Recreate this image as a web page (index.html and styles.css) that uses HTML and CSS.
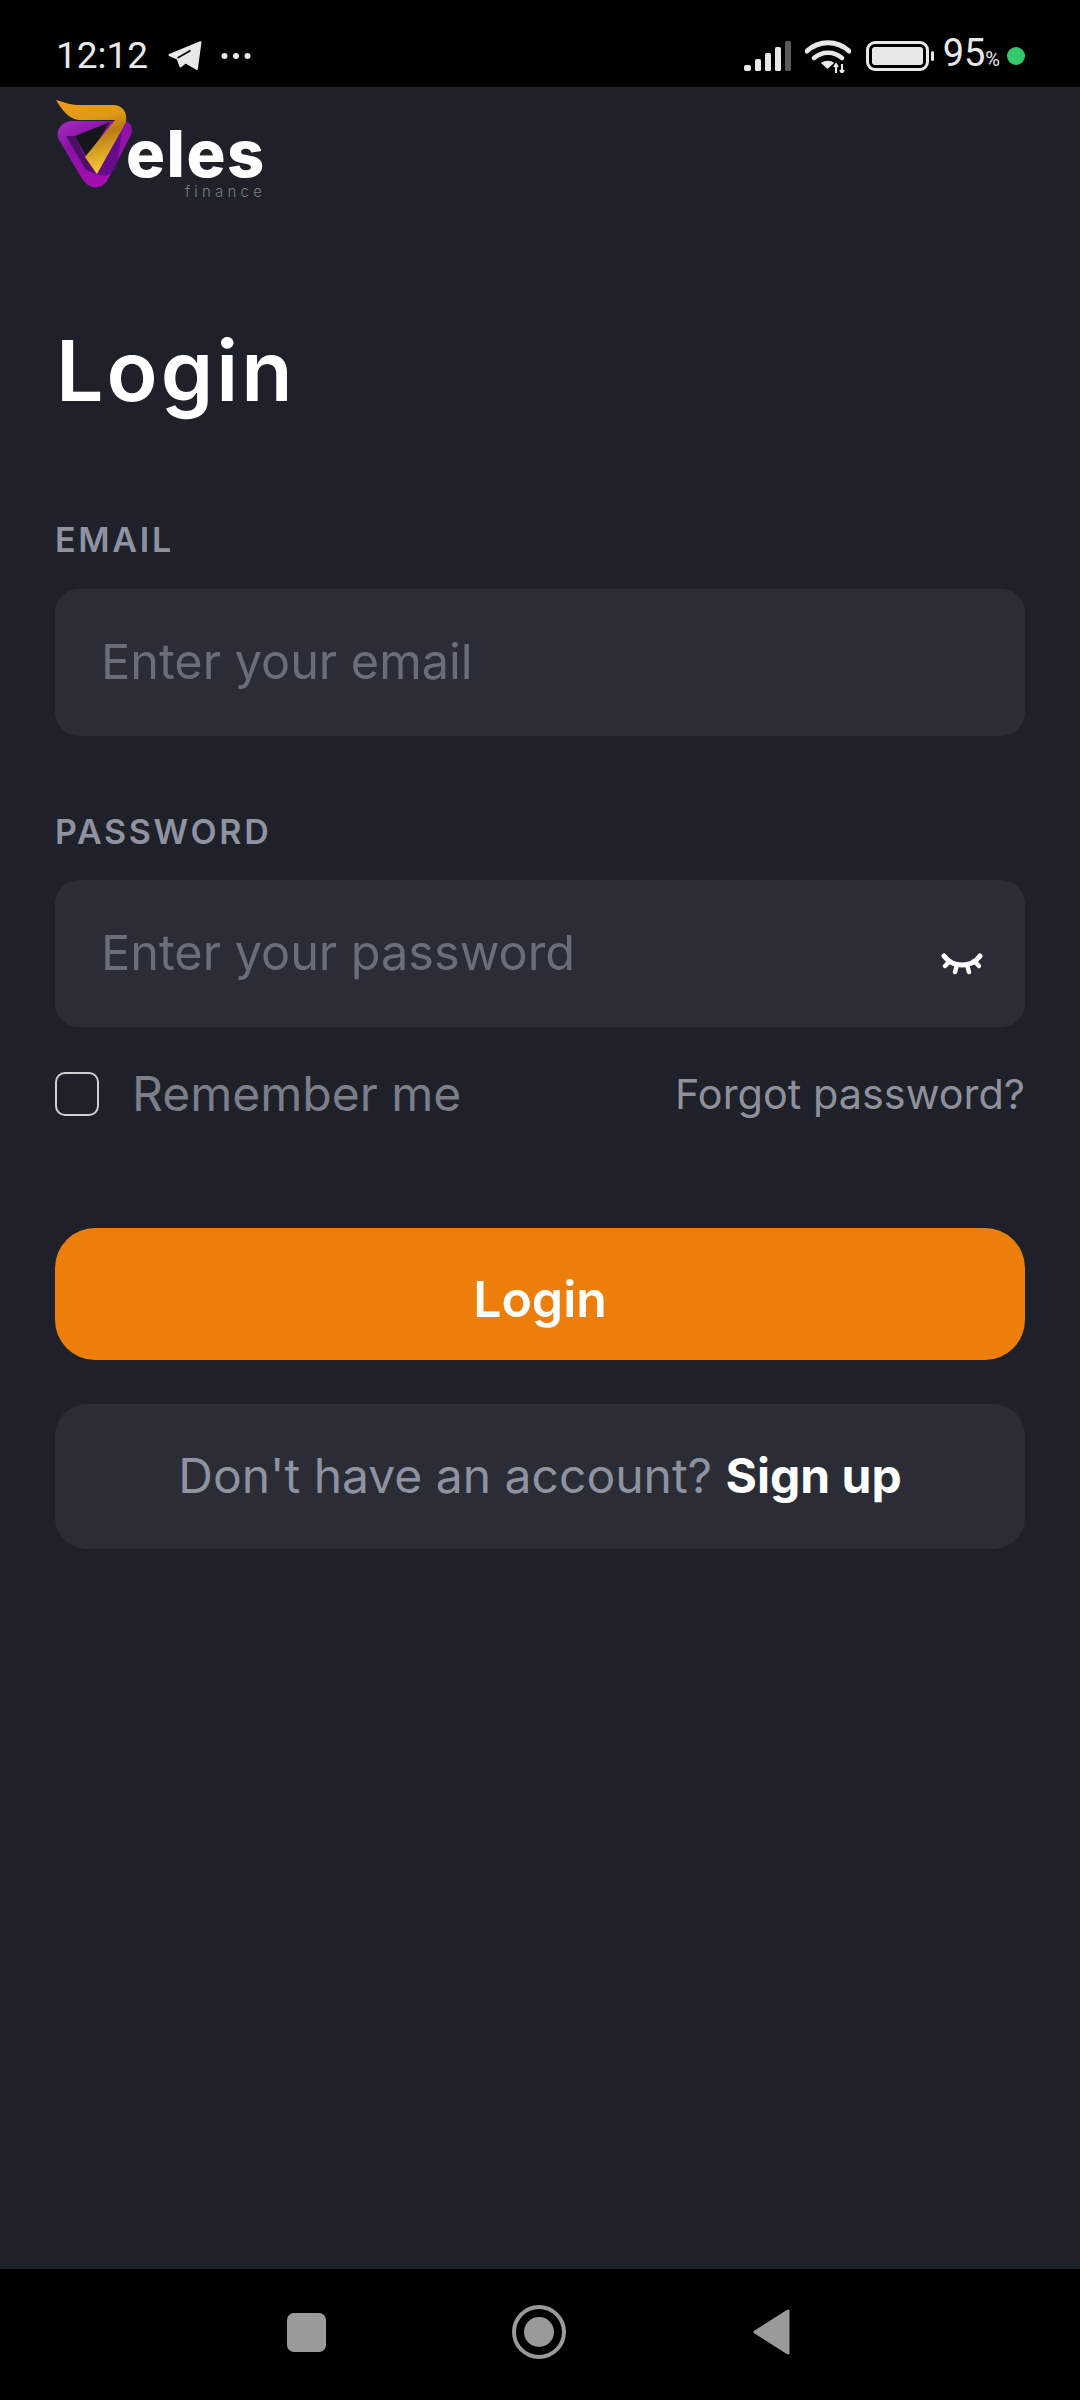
FILE: index.html
```html
<!DOCTYPE html>
<html lang="en">
  <head>
    <meta charset="UTF-8" />
    <meta name="viewport" content="width=device-width, initial-scale=1.0" />
    <title>Veles Finance - Login</title>
    <link rel="stylesheet" href="styles.css">
  </head>
  <body>
    <!-- status bar -->
    <div class="status-bar">
      <div class="status-left">
        <span class="status-time">12:12</span>
        <svg class="icon-telegram" viewBox="0 0 34 30">
          <path d="M1.500 14 32.500 1.200 28.800 28 17.500 21.500 12.500 25.500 9.500 17.500Z" fill="#e8e8e8" stroke="#e8e8e8" stroke-width="2" stroke-linejoin="round"/>
          <path d="M9.500 17 22.500 9.500" fill="none" stroke="#000" stroke-width="1.500"/>
        </svg>
        <svg class="icon-dots" viewBox="0 0 30 8">
          <circle cx="3.500" cy="4" r="3" fill="#e8e8e8"/>
          <circle cx="15" cy="4" r="3" fill="#e8e8e8"/>
          <circle cx="26.500" cy="4" r="3" fill="#e8e8e8"/>
        </svg>
      </div>
      <div class="status-right">
        <svg class="icon-signal" viewBox="0 0 48 30">
          <rect x="0" y="24" width="7" height="6" rx="2" fill="#e8e8e8"/>
          <rect x="11" y="18" width="6" height="12" rx="1.500" fill="#e8e8e8"/>
          <rect x="21" y="12" width="6" height="18" rx="1.500" fill="#e8e8e8"/>
          <rect x="31" y="6" width="6" height="24" rx="1.500" fill="#e8e8e8"/>
          <rect x="41" y="0" width="6" height="30" rx="1.500" fill="#5a5a5a"/>
        </svg>
        <svg class="icon-wifi" viewBox="0 0 46 34">
          <path d="M2 12C14 1 32 1 44 12" fill="none" stroke="#e8e8e8" stroke-width="5" stroke-linecap="round"/>
          <path d="M9 19c8-7 20-7 28 0" fill="none" stroke="#e8e8e8" stroke-width="4.500" stroke-linecap="round"/>
          <path d="M16 25c4-3 10-3 13 0l-6.500 6Z" fill="#e8e8e8" transform="translate(0 -1)"/>
          <path d="M31 34v-8M29 28l2-3 2 3M37 25v8M35 31l2 3 2-3" fill="none" stroke="#e8e8e8" stroke-width="2"/>
        </svg>
        <div class="battery">
          <div class="battery-body"><div class="battery-fill"></div></div>
          <div class="battery-nub"></div>
        </div>
        <span class="status-percent">95<small>%</small></span>
        <span class="status-led"></span>
      </div>
    </div>

    <div class="main-content">
      <!-- logo -->
      <svg class="logo" viewBox="50 95 220 110">
        <defs>
          <linearGradient id="logoPurple" x1="0" y1="0" x2="0.6" y2="1">
            <stop offset="0" stop-color="#a92fc0"/>
            <stop offset="0.35" stop-color="#8a10a8"/>
            <stop offset="1" stop-color="#a80fb0"/>
          </linearGradient>
          <linearGradient id="logoGold" x1="0.2" y1="0" x2="0.4" y2="1">
            <stop offset="0" stop-color="#f09a12"/>
            <stop offset="0.3" stop-color="#dc9a18"/>
            <stop offset="0.5" stop-color="#b87a14"/>
            <stop offset="1" stop-color="#f6c833"/>
          </linearGradient>
        </defs>
        <path fill="url(#logoPurple)" d="M72 121H112L127 122C132 123 133 130 131 135L108 179C104 187 95 190 88 185C85 183 83 180 81 177L59 140C55 132 60 122 72 121Z"/>
        <path fill="#4a1066" d="M66 136 86 170 96 174 85 157 75 136Z"/>
        <path fill="#4f0d7a" d="M96 174 122 131 116 170 106 176Z" opacity="0.7"/>
        <path fill="#14161c" d="M75 136 110 122 87 158Z"/>
        <path fill="url(#logoGold)" d="M56 100C66 103 72 105 80 105H113C122 105 128 112 126 122L97 174 85 157 115 120H78C68 118 62 110 56 100Z"/>
        <text class="logo-name" x="126" y="177">eles</text>
        <text class="logo-sub" x="185" y="197">finance</text>
      </svg>

      <h1 class="page-title">Login</h1>

      <form class="login-form">
        <label class="field-label">EMAIL</label>
        <div class="input-box">
          <input class="text-input" type="text" placeholder="Enter your email" />
        </div>

        <label class="field-label field-label-second">PASSWORD</label>
        <div class="input-box">
          <input class="text-input" type="password" placeholder="Enter your password" />
          <svg class="icon-eye" viewBox="0 0 42 24">
            <path d="M3 3C12 15 30 15 39 3" fill="none" stroke="#fff" stroke-width="5" stroke-linecap="round"/>
            <path d="M8 9 4 13M34 9l4 4M16 12l-2 7M26 12l2 7" fill="none" stroke="#fff" stroke-width="4.500" stroke-linecap="round"/>
          </svg>
        </div>

        <div class="form-options">
          <label class="remember">
            <span class="checkbox"></span>
            Remember me
          </label>
          <a class="forgot-link">Forgot password?</a>
        </div>

        <button class="login-button" type="button">Login</button>

        <div class="signup-card">
          Don't have an account? <a class="signup-link">Sign up</a>
        </div>
      </form>
    </div>

    <!-- bottom nav -->
    <div class="nav-bar">
      <div class="nav-square"></div>
      <svg class="nav-home" viewBox="0 0 54 54">
        <circle cx="27" cy="27" r="25" fill="none" stroke="#9a9a9a" stroke-width="4"/>
        <circle cx="27" cy="27" r="15" fill="#9a9a9a"/>
      </svg>
      <svg class="nav-back" viewBox="0 0 37 46">
        <path d="M35 2 2 23l33 21Z" fill="#9a9a9a" stroke="#9a9a9a" stroke-width="3" stroke-linejoin="round"/>
      </svg>
    </div>
  </body>
</html>
```

FILE: styles.css
```css
* {
  margin: 0;
  padding: 0;
  box-sizing: border-box;
}

body {
  font-family: Inter, "Noto Sans", sans-serif;
  background-color: #1e2129;
  color: #ffffff;
  width: 1080px;
  height: 2400px;
  display: flex;
  flex-direction: column;
}

/* status bar */
.status-bar {
  height: 87px;
  background: #000000;
  display: flex;
  justify-content: space-between;
  align-items: center;
  padding: 24px 55px 0 56px;
  font-family: Roboto, sans-serif;
  color: #e8e8e8;
}

.status-left,
.status-right {
  display: flex;
  align-items: center;
}

.status-time {
  font-size: 37px;
  line-height: 38px;
  margin-right: 20px;
}

.icon-telegram {
  width: 34px;
  height: 30px;
  margin-right: 19px;
}

.icon-dots {
  width: 30px;
  height: 8px;
}

.icon-signal {
  width: 48px;
  height: 30px;
  margin-right: 13px;
}

.icon-wifi {
  width: 46px;
  height: 34px;
  margin-right: 15px;
}

.battery {
  display: flex;
  align-items: center;
  margin-right: 9px;
}

.battery-body {
  width: 63px;
  height: 30px;
  border: 3px solid #e8e8e8;
  border-radius: 9px;
  padding: 3px;
}

.battery-fill {
  height: 100%;
  background: #e8e8e8;
  border-radius: 3px;
}

.battery-nub {
  width: 3px;
  height: 10px;
  margin-left: 2px;
  background: #e8e8e8;
  border-radius: 2px;
}

.status-percent {
  font-size: 38px;
  line-height: 38px;
  margin-right: 7px;
}

.status-percent small {
  font-size: 20px;
}

.status-led {
  width: 18px;
  height: 18px;
  border-radius: 50%;
  background: #34c96a;
}

/* main */
.main-content {
  flex: 1;
  padding: 8px 55px 0;
}

.logo {
  display: block;
  width: 220px;
  height: 110px;
  margin-left: -5px;
}

.logo-name {
  font-size: 65px;
  font-weight: 800;
  letter-spacing: 1.500px;
  fill: #ffffff;
}

.logo-sub {
  font-size: 15px;
  font-weight: 300;
  letter-spacing: 4.200px;
  fill: #7a7d86;
}

.page-title {
  font-size: 84px;
  line-height: 100px;
  font-weight: 600;
  letter-spacing: 3px;
  margin-top: 116px;
  margin-left: 1px;
}

.login-form {
  margin-top: 99px;
}

.field-label {
  display: block;
  font-size: 34px;
  line-height: 40px;
  font-weight: 600;
  letter-spacing: 2.700px;
  color: #8f92a0;
  margin-bottom: 29px;
}

.field-label-second {
  margin-top: 76px;
  margin-bottom: 28px;
}

.input-box {
  position: relative;
  height: 147px;
  background: #2a2d35;
  border-radius: 24px;
  display: flex;
  align-items: center;
  padding: 0 46px 3px;
}

.text-input {
  width: 100%;
  background: transparent;
  border: none;
  outline: none;
  font-family: Inter, sans-serif;
  font-size: 48.600px;
  color: #ffffff;
}

.text-input::placeholder {
  color: #6a6d7a;
  opacity: 1;
}

.icon-eye {
  position: absolute;
  right: 42px;
  top: 73px;
  width: 42px;
  height: 24px;
}

.form-options {
  display: flex;
  justify-content: space-between;
  align-items: center;
  margin-top: 45px;
}

.remember {
  display: flex;
  align-items: center;
  gap: 33px;
  font-size: 48px;
  line-height: 44px;
  color: #7c7e8a;
}

.checkbox {
  width: 44px;
  height: 44px;
  border: 2px solid #cfd0d4;
  border-radius: 10px;
}

.forgot-link {
  font-size: 41.400px;
  line-height: 44px;
  color: #8f909b;
}

.login-button {
  display: block;
  width: 100%;
  height: 132px;
  margin-top: 112px;
  padding-top: 9px;
  background: #ec7f0c;
  border: none;
  border-radius: 40px;
  color: #ffffff;
  font-family: Inter, sans-serif;
  font-size: 50px;
  font-weight: 600;
}

.signup-card {
  height: 145px;
  margin-top: 44px;
  padding-bottom: 2px;
  background: #2a2d35;
  border-radius: 32px;
  display: flex;
  align-items: center;
  justify-content: center;
  gap: 0.28em;
  font-size: 48px;
  color: #8f92a0;
}

.signup-link {
  font-weight: 700;
  color: #ffffff;
}

/* bottom nav */
.nav-bar {
  height: 131px;
  background: #000000;
  display: flex;
  align-items: center;
  padding: 0 0 5px 287px;
}

.nav-square {
  width: 39px;
  height: 39px;
  background: #9a9a9a;
  border-radius: 7px;
  margin-right: 186px;
}

.nav-home {
  width: 54px;
  height: 54px;
  margin-right: 187px;
}

.nav-back {
  width: 37px;
  height: 46px;
}
```
